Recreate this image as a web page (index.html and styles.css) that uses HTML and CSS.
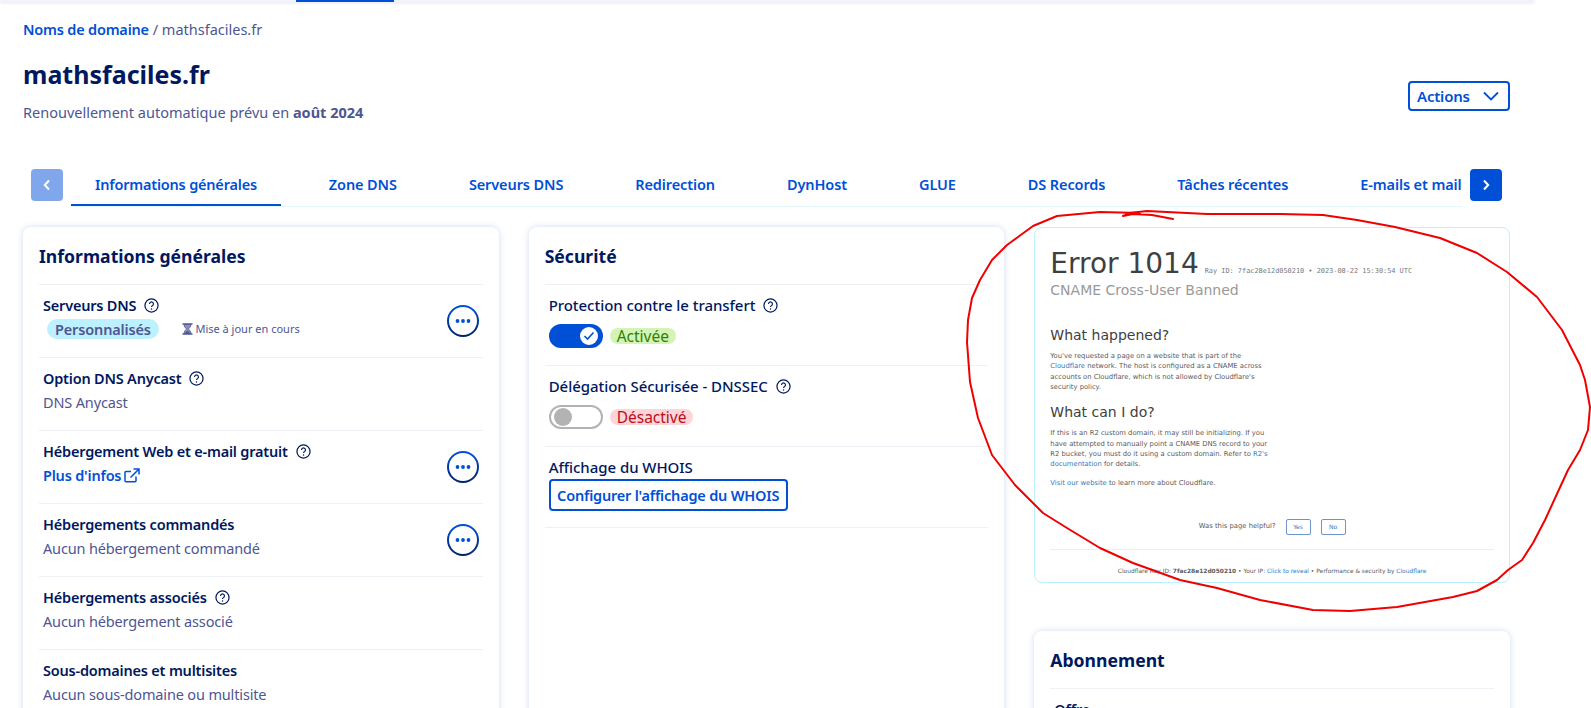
FILE: index.html
```html
<!DOCTYPE html>
<html lang="fr">
<head>
  <meta charset="UTF-8">
  <title>mathsfaciles.fr</title>
  <link rel="stylesheet" href="styles.css">
</head>
<body>
  <svg class="sprites" width="0" height="0">
    <symbol id="i-help" viewBox="0 0 16 16">
      <circle cx="8" cy="8" r="7" fill="none" stroke="#00185e" stroke-width="1.3"/>
      <path d="M5.9 6.3a2.1 2.1 0 1 1 3.3 1.7c-.8.5-1.2.9-1.2 1.7" fill="none" stroke="#00185e" stroke-width="1.2"/>
      <circle cx="8" cy="11.6" r=".8" fill="#00185e"/>
    </symbol>
    <symbol id="i-more" viewBox="0 0 32 32">
      <circle cx="16" cy="16" r="15" fill="#fff" stroke="url(#more-ring)" stroke-width="2"/>
      <circle cx="10.5" cy="16" r="1.9" fill="#0050d7"/>
      <circle cx="16" cy="16" r="1.9" fill="#0050d7"/>
      <circle cx="21.5" cy="16" r="1.9" fill="#0050d7"/>
    </symbol>
    <defs>
      <linearGradient id="more-ring" x1="0" y1="0" x2="0" y2="1">
        <stop offset="0" stop-color="#0050d7"/>
        <stop offset="1" stop-color="#00246e"/>
      </linearGradient>
    </defs>
  </svg>

  <div class="topbar"><span class="topbar-active"></span></div>

  <main class="page">
    <div class="crumbs"><a href="#">Noms de domaine</a> / mathsfaciles.fr</div>

    <header class="head">
      <div>
        <h1>mathsfaciles.fr</h1>
        <p class="renew">Renouvellement automatique prévu en <b>août 2024</b></p>
      </div>
      <button class="btn-actions">Actions
        <svg width="16" height="10" viewBox="0 0 16 10"><path d="M1 1.500l7 7 7-7" fill="none" stroke="#0050d7" stroke-width="1.800"/></svg>
      </button>
    </header>

    <nav class="tabs-row">
      <button class="tab-arrow off"><svg width="8" height="12" viewBox="0 0 8 12"><path d="M6 1.500L1.800 6 6 10.500" fill="none" stroke="#fff" stroke-width="2"/></svg></button>
      <div class="tabs">
        <a class="tab active" href="#">Informations générales</a>
        <a class="tab" href="#">Zone DNS</a>
        <a class="tab" href="#">Serveurs DNS</a>
        <a class="tab" href="#">Redirection</a>
        <a class="tab" href="#">DynHost</a>
        <a class="tab" href="#">GLUE</a>
        <a class="tab" href="#">DS Records</a>
        <a class="tab" href="#">Tâches récentes</a>
        <a class="tab" href="#">E-mails et mailing lists</a>
      </div>
      <button class="tab-arrow"><svg width="8" height="12" viewBox="0 0 8 12"><path d="M2 1.500L6.200 6 2 10.500" fill="none" stroke="#fff" stroke-width="2"/></svg></button>
    </nav>

    <div class="cols">
      <section class="card">
        <h2>Informations générales</h2>
        <div class="row">
          <div>
            <div class="label">Serveurs DNS <svg class="help"><use href="#i-help"/></svg></div>
            <div class="value">
              <span class="pill-info">Personnalisés</span>
              <span class="pending">
                <svg width="11" height="12" viewBox="0 0 11 12"><path d="M.5 1h10M.5 11h10" stroke="#4d5693" stroke-width="1.400"/><path d="M2 1.500c0 2 1.400 3.300 2.600 4.500C3.400 7.200 2 8.500 2 10.500h7c0-2-1.400-3.300-2.600-4.500C7.600 4.800 9 3.500 9 1.500z" fill="#8b91bb" stroke="#4d5693" stroke-width=".8"/><path d="M3 10.500c.4-1.300 1.500-2.200 2.500-2.800 1 .6 2.100 1.500 2.500 2.800z" fill="#4d5693"/></svg>
                Mise à jour en cours
              </span>
            </div>
          </div>
          <svg class="more"><use href="#i-more"/></svg>
        </div>
        <div class="row">
          <div>
            <div class="label">Option DNS Anycast <svg class="help"><use href="#i-help"/></svg></div>
            <div class="value">DNS Anycast</div>
          </div>
        </div>
        <div class="row">
          <div>
            <div class="label">Hébergement Web et e-mail gratuit <svg class="help"><use href="#i-help"/></svg></div>
            <div class="value"><a class="link" href="#">Plus d'infos
              <svg width="16" height="15" viewBox="0 0 16 15"><path d="M12 8.500v4.200a1 1 0 0 1-1 1H2a1 1 0 0 1-1-1V4.500a1 1 0 0 1 1-1h5M9.500 1H15v5.500M15 1L6.500 9.500" fill="none" stroke="#0050d7" stroke-width="1.500"/></svg>
            </a></div>
          </div>
          <svg class="more"><use href="#i-more"/></svg>
        </div>
        <div class="row">
          <div>
            <div class="label">Hébergements commandés</div>
            <div class="value">Aucun hébergement commandé</div>
          </div>
          <svg class="more"><use href="#i-more"/></svg>
        </div>
        <div class="row">
          <div>
            <div class="label">Hébergements associés <svg class="help"><use href="#i-help"/></svg></div>
            <div class="value">Aucun hébergement associé</div>
          </div>
        </div>
        <div class="row">
          <div>
            <div class="label">Sous-domaines et multisites</div>
            <div class="value">Aucun sous-domaine ou multisite</div>
          </div>
        </div>
      </section>

      <section class="card">
        <h2>Sécurité</h2>
        <div class="row tall">
          <div>
            <div class="label thin">Protection contre le transfert <svg class="help"><use href="#i-help"/></svg></div>
            <div class="state">
              <span class="toggle on"><span class="knob"><svg width="12" height="10" viewBox="0 0 12 10"><path d="M1.500 5l3 3 6-6.500" fill="none" stroke="#0050d7" stroke-width="1.600"/></svg></span></span>
              <span class="pill-ok">Activée</span>
            </div>
          </div>
        </div>
        <div class="row tall">
          <div>
            <div class="label thin">Délégation Sécurisée - DNSSEC <svg class="help"><use href="#i-help"/></svg></div>
            <div class="state">
              <span class="toggle"><span class="knob"></span></span>
              <span class="pill-off">Désactivé</span>
            </div>
          </div>
        </div>
        <div class="row tall last">
          <div>
            <div class="label thin">Affichage du WHOIS</div>
            <button class="btn-outline">Configurer l'affichage du WHOIS</button>
          </div>
        </div>
      </section>

      <div class="col-side">
        <section class="cf-error">
          <div class="cf-title">Error 1014 <span class="cf-ray">Ray ID: 7fac28e12d050210 • 2023-08-22 15:30:54 UTC</span></div>
          <div class="cf-sub">CNAME Cross-User Banned</div>
          <h3 class="first">What happened?</h3>
          <p>You've requested a page on a website that is part of the<br><a href="#">Cloudflare</a> network. The host is configured as a CNAME across<br>accounts on Cloudflare, which is not allowed by Cloudflare's<br>security policy.</p>
          <h3>What can I do?</h3>
          <p>If this is an R2 custom domain, it may still be initializing. If you<br>have attempted to manually point a CNAME DNS record to your<br>R2 bucket, you must do it using a custom domain. Refer to <a href="#">R2's<br>documentation</a> for details.</p>
          <p class="cf-visit"><a href="#">Visit our website</a> to learn more about Cloudflare.</p>
          <div class="cf-helpful">Was this page helpful? <button>Yes</button><button>No</button></div>
          <div class="cf-foot">Cloudflare Ray ID: <b>7fac28e12d050210</b> • Your IP: <a href="#">Click to reveal</a> • Performance &amp; security by <a href="#">Cloudflare</a></div>
        </section>

        <section class="card sub">
          <h2>Abonnement</h2>
          <div class="row">
            <div>
              <div class="label">Offre</div>
              <div class="value">Domaine</div>
            </div>
          </div>
        </section>
      </div>
    </div>
  </main>

  <!-- red hand-drawn circle on top of the screenshot -->
  <svg class="scribble" width="1591" height="708" viewBox="0 0 1591 708">
    <path d="M1173 219L1152 215L1133 214L1123 216L1130 213L1147 211L1167 212L1207 214L1280 214M1140 213L1100 212L1057 216L1033 226L1018 237L1007 245L992 260L980 280L972 298L968 320L967 342L970 382L978 418L992 455L1015 485L1030 500L1043 513L1067 528L1100 548L1133 563L1180 580L1217 588L1260 600L1313 610L1350 611L1397 607L1453 597L1477 591L1497 580L1508 570L1522 560L1533 543L1545 520L1562 483L1568 470L1580 450L1588 430L1590 407L1585 380L1580 365L1562 330L1537 297L1507 272L1477 253L1440 238L1395 227L1357 220L1323 215L1280 214" fill="none" stroke="#f00000" stroke-width="2" stroke-linejoin="round" stroke-linecap="round"/>
  </svg>
</body>
</html>
```

FILE: styles.css
```css
* { box-sizing:border-box; }
html, body { margin:0; height:708px; overflow:hidden; background:#fff; }
body { position:relative; font-family:"Noto Sans", sans-serif; font-size:14.5px; letter-spacing:-0.15px; color:#4d5693; }
a { color:#0050d7; text-decoration:none; }
button { font-family:inherit; cursor:pointer; }
.sprites { position:absolute; }

.topbar { width:1534px; height:2px; background:#f2f2fb; box-shadow:0 1px 3px rgba(40,40,160,.14); }
.topbar-active { display:block; width:98px; height:2px; margin-left:296px; background:#0050d7; }

.page { width:1534px; padding:17px 24px 0 23px; }
.crumbs { line-height:20px; letter-spacing:0; }
.crumbs a { font-weight:600; letter-spacing:-0.2px; }

.head { display:flex; justify-content:space-between; align-items:flex-start; }
h1 { margin:18px 0 0; font-size:25px; line-height:34px; font-weight:700; letter-spacing:0; color:#00185e; }
.renew { margin:9px 0 0; line-height:24px; letter-spacing:0; }
.btn-actions { display:flex; align-items:center; gap:13px; width:102px; height:30px; margin-top:42px; padding:0 0 0 7px;
  background:#fff; border:2px solid #0050d7; border-radius:4px; color:#0050d7; font-size:15px; font-weight:600; letter-spacing:-0.2px;
}

.tabs-row { display:flex; gap:8px; margin:45px 8px 0; align-items:flex-start; }
.tab-arrow { flex:none; display:flex; align-items:center; justify-content:center; width:32px; height:32px; padding:0; background:#0050d7; border:0; border-radius:4px; }
.tab-arrow.off { background:#80a7eb; }
.tabs { flex:1; min-width:0; display:flex; overflow:hidden; gap:24px; height:38px; border-bottom:1px solid #e3f6fc; }
.tab { flex:none; height:37px; padding:5px 24px 0; line-height:20px; font-weight:600; letter-spacing:-0.11px; white-space:nowrap; }
.tab.active { border-bottom:2px solid #0050d7; letter-spacing:-0.2px; }

.cols { display:grid; grid-template-columns:repeat(3,1fr); gap:30px; margin-top:20px; align-items:start; }
.card { background:#fff; border-radius:8px; padding:16px 16px 40px; box-shadow:0 0 6px rgba(40,89,192,.22); min-height:620px; }
.card.sub { min-height:0; margin-top:48px; }
h2 { margin:0 0 15px; font-size:17.6px; line-height:26px; font-weight:700; letter-spacing:0; color:#00185e; }
.row { display:flex; justify-content:space-between; align-items:center; min-height:73px; padding:0 4px; border-top:1px solid #eef0f5; }
.row > div:first-child { align-self:flex-start; padding-top:9px; }
.row.tall { min-height:81px; }
.row.last { min-height:82px; border-bottom:1px solid #eef0f5; }
.label { display:flex; align-items:center; gap:8px; margin-bottom:1px; line-height:22px; font-weight:600; letter-spacing:-0.2px; color:#00185e; }
.label.thin { font-size:15px; font-weight:500; letter-spacing:-0.05px; }
.help { width:15px; height:15px; }
.more { width:32px; height:32px; }
.value { line-height:24px; }
.link { display:inline-flex; align-items:center; gap:3px; font-weight:600; letter-spacing:-0.2px; }

.pill-info { display:inline-block; margin-left:4px; padding:0 8px; line-height:20px; background:#bef1ff; border-radius:10px; font-weight:600; }
.pending { display:inline-flex; align-items:center; gap:2px; margin-left:20px; font-size:11px; letter-spacing:0; }
.state { display:flex; align-items:center; gap:7px; margin-top:8px; }
.toggle { display:flex; align-items:center; width:54px; height:24px; padding:0 3px; background:#fff; border:2px solid #b3b3b3; border-radius:12px; }
.toggle .knob { display:flex; align-items:center; justify-content:center; width:18px; height:18px; background:#b3b3b3; border-radius:50%; }
.toggle.on { justify-content:flex-end; background:#0050d7; border-color:#0050d7; }
.toggle.on .knob { background:#fff; }
.pill-ok, .pill-off { padding:0 7px; line-height:16px; border-radius:8px; font-size:15.5px; letter-spacing:0; }
.pill-ok { background:#d4f4b6; color:#318000; }
.pill-off { background:#ffd4d9; color:#b5101c; }
.btn-outline { display:block; width:239px; height:32px; padding:0; background:#fff; border:2px solid #0050d7; border-radius:4px; color:#0050d7; font-size:14.5px; font-weight:600; letter-spacing:-0.2px; white-space:nowrap; }

/* the pasted cloudflare page */
.cf-error { height:356px; padding:19px 15px 0; border:1px solid #bef1ff; border-radius:8px; font-family:"DejaVu Sans", sans-serif; font-size:6.8px; line-height:10.4px; letter-spacing:0; color:#5a5a5a; }
.cf-error a { color:#2f7bbf; }
.cf-title { font-size:28px; line-height:34px; color:#404040; white-space:nowrap; }
.cf-ray { font-family:"DejaVu Sans Mono", monospace; font-size:6.9px; line-height:10px; color:#777; margin-left:-3px; }
.cf-sub { font-size:14px; line-height:18px; color:#999; }
.cf-error h3 { margin:9.6px 0 0; font-size:14px; line-height:20px; font-weight:400; color:#404040; }
.cf-error h3.first { margin-top:26px; }
.cf-error p { margin:6px 0 0; white-space:nowrap; }
.cf-error p.cf-visit { margin-top:8.4px; }
.cf-helpful { display:flex; justify-content:center; align-items:center; gap:10px; margin-top:30px; padding-bottom:14px; border-bottom:1px solid #efefef; }
.cf-helpful button { width:25px; height:16px; padding:0; background:#fff; border:1px solid #6b93cf; border-radius:2px; color:#2f7bbf; font-size:6px; }
.cf-foot { margin-top:16px; text-align:center; font-size:5.9px; line-height:10px; white-space:nowrap; }

.scribble { position:absolute; left:0; top:0; pointer-events:none; }
```
